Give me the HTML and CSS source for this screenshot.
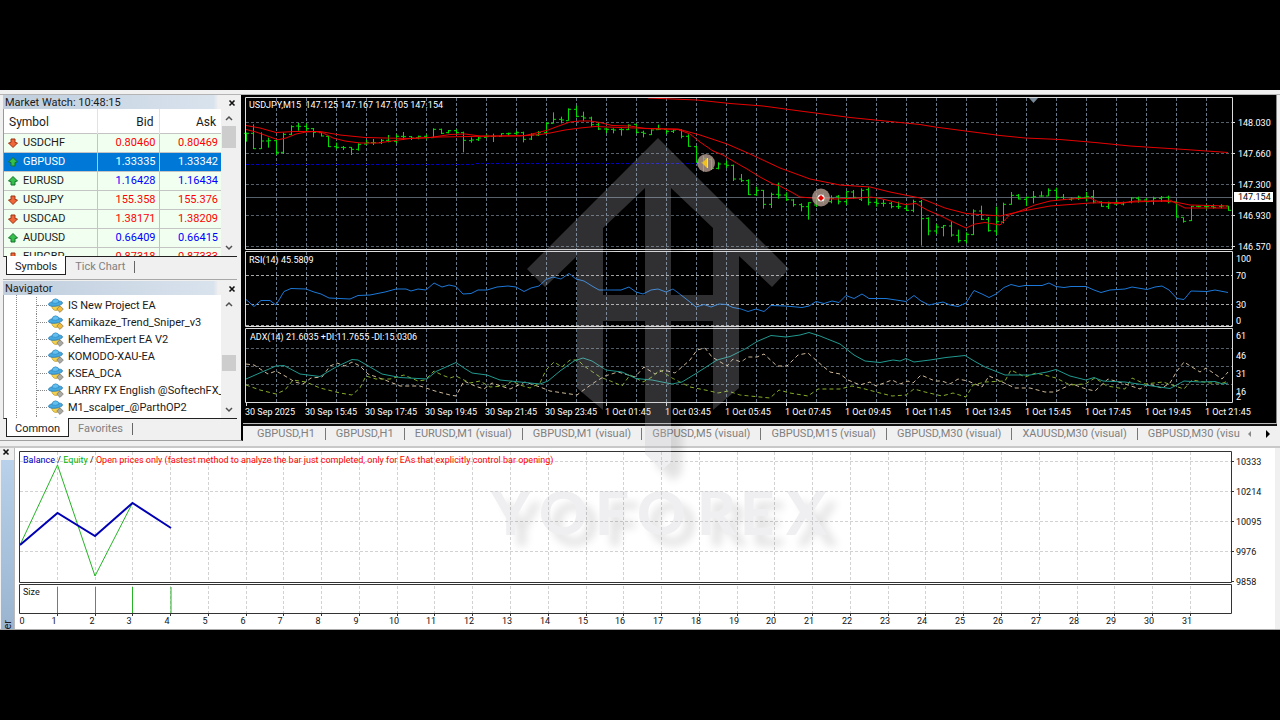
FILE: index.html
```html
<!DOCTYPE html>
<html lang="en">
<head>
    <meta charset="UTF-8">
    <meta name="viewport" content="width=device-width, initial-scale=1.0">
    <title>Strategy Tester - USDJPY,M15</title>
    <link rel="stylesheet" href="styles.css">
</head>
<body>

<svg class="symbols" aria-hidden="true">
    <symbol id="up" viewBox="0 0 10 10"><path d="M5 .5 9.5 5 7 5.500V9H3V5.500L.5 5Z" fill="#35c04c" stroke="#14702a"/></symbol>
    <symbol id="down" viewBox="0 0 10 10"><path d="M5 9.500 9.500 5 7 4.500V1H3V4.500L.5 5Z" fill="#f0673a" stroke="#9c3212"/></symbol>
    <symbol id="expert" viewBox="0 0 16 15">
        <path d="M3.500 7Q4 12.500 8.500 12.500 11 12 12 8Z" fill="#f5d24c" stroke="#b98f1c" stroke-width=".7"/>
        <ellipse cx="7.500" cy="5.600" rx="7.100" ry="2.600" transform="rotate(-7 7.500 5.600)" fill="#45a9e0" stroke="#2273a8" stroke-width=".7"/>
        <path d="M4 4.800Q4 1 7.500 .8 11 1 11 4.300 7.500 6.200 4 4.800Z" fill="#62bff0" stroke="#2a82b8" stroke-width=".6"/>
        <path d="M12 7.800 15.300 11.100 12 14.400 8.700 11.100Z" fill="currentColor" stroke="#77736a" stroke-width=".7"/>
    </symbol>
    <symbol id="cross" viewBox="0 0 8 8"><path d="M1.500 1.500 6.500 6.500M6.500 1.500 1.500 6.500" stroke="#111" stroke-width="1.600"/></symbol>
    <symbol id="chev-up" viewBox="0 0 8 6"><path d="M1 5 4 2 7 5" fill="none" stroke="#505050" stroke-width="1.500"/></symbol>
    <symbol id="chev-down" viewBox="0 0 8 6"><path d="M1 1 4 4 7 1" fill="none" stroke="#505050" stroke-width="1.500"/></symbol>
</svg>

<main class="terminal">
    <div class="toolbar-edge"></div>

    <div class="workspace">
        <aside class="sidebar">
            <section class="panel market">
                <header class="panel-title">
                    <span>Market Watch: 10:48:15</span>
                    <button type="button" aria-label="Close"><svg><use href="#cross"/></svg></button>
                </header>
                <div class="panel-body">
                    <div class="panel-view">
                        <table>
                            <thead><tr><th>Symbol</th><th>Bid</th><th>Ask</th></tr></thead>
                            <tbody>
                                <tr class="fall"><td><svg><use href="#down"/></svg>USDCHF</td><td>0.80460</td><td>0.80469</td></tr>
                                <tr class="selected"><td><svg><use href="#up"/></svg>GBPUSD</td><td>1.33335</td><td>1.33342</td></tr>
                                <tr class="rise"><td><svg><use href="#up"/></svg>EURUSD</td><td>1.16428</td><td>1.16434</td></tr>
                                <tr class="fall"><td><svg><use href="#down"/></svg>USDJPY</td><td>155.358</td><td>155.376</td></tr>
                                <tr class="fall"><td><svg><use href="#down"/></svg>USDCAD</td><td>1.38171</td><td>1.38209</td></tr>
                                <tr class="rise"><td><svg><use href="#up"/></svg>AUDUSD</td><td>0.66409</td><td>0.66415</td></tr>
                                <tr class="fall"><td><svg><use href="#down"/></svg>EURGBP</td><td>0.87318</td><td>0.87333</td></tr>
                            </tbody>
                        </table>
                    </div>
                    <div class="scroll"><svg><use href="#chev-up"/></svg><i class="thumb"></i><svg><use href="#chev-down"/></svg></div>
                </div>
                <nav class="panel-tabs">
                    <button type="button" class="active">Symbols</button>
                    <button type="button">Tick Chart</button>
                </nav>
            </section>

            <section class="panel navigator">
                <header class="panel-title">
                    <span>Navigator</span>
                    <button type="button" aria-label="Close"><svg><use href="#cross"/></svg></button>
                </header>
                <div class="panel-body">
                    <ul class="tree">
                        <li class="licensed"><svg><use href="#expert"/></svg>IS New Project EA</li>
                        <li class="licensed"><svg><use href="#expert"/></svg>Kamikaze_Trend_Sniper_v3</li>
                        <li><svg><use href="#expert"/></svg>KelhemExpert EA V2</li>
                        <li><svg><use href="#expert"/></svg>KOMODO-XAU-EA</li>
                        <li><svg><use href="#expert"/></svg>KSEA_DCA</li>
                        <li><svg><use href="#expert"/></svg>LARRY FX English @SoftechFX_</li>
                        <li><svg><use href="#expert"/></svg>M1_scalper_@ParthOP2</li>
                        <li><svg><use href="#expert"/></svg></li>
                    </ul>
                    <div class="scroll"><svg><use href="#chev-up"/></svg><i class="thumb low"></i><svg><use href="#chev-down"/></svg></div>
                </div>
                <nav class="panel-tabs">
                    <button type="button" class="active">Common</button>
                    <button type="button">Favorites</button>
                </nav>
            </section>
        </aside>

        <section class="charts">
            <div class="chart-window">
                <svg id="priceChart" viewBox="243 95 1033 328"></svg>
            </div>
            <nav class="chart-tabs">
                <button type="button">GBPUSD,H1</button>
                <button type="button">GBPUSD,H1</button>
                <button type="button">EURUSD,M1 (visual)</button>
                <button type="button">GBPUSD,M1 (visual)</button>
                <button type="button">GBPUSD,M5 (visual)</button>
                <button type="button">GBPUSD,M15 (visual)</button>
                <button type="button">GBPUSD,M30 (visual)</button>
                <button type="button">XAUUSD,M30 (visual)</button>
                <button type="button" class="cut">GBPUSD,M30 (visu</button>
                <span class="tab-arrows">
                    <svg viewBox="0 0 24 8"><path d="M4 1V7L1 4Z" fill="#888"/><path d="M19 0V8L23 4Z" fill="#000"/></svg>
                </span>
            </nav>
        </section>
    </div>

    <section class="tester">
        <div class="tester-handle">
            <button type="button" aria-label="Close"><svg><use href="#cross"/></svg></button>
            <span>Tester</span>
        </div>
        <div class="tester-graph">
            <svg id="testerChart" viewBox="15 448 1260 181"></svg>
        </div>
    </section>

    <svg class="watermark" viewBox="0 0 1280 540">
        <path d="M658 48 789 179 772 197 739 166V298L713 320V231H671V372L662 380 645 364V231H603V320L577 298V166L545 197 527 179ZM645 98 603 138V205H645ZM671 98V205H713V138Z" fill-rule="evenodd"/>
        <text y="445" x="491 539 595 637 697 740 786">YOFOREX</text>
    </svg>
</main>

<script src="charts.js"></script>
</body>
</html>
```
FILE: styles.css
```css
* {
    box-sizing: border-box;
}

body {
    margin: 0;
    min-height: 100vh;
    display: flex;
    flex-direction: column;
    justify-content: center;
    background-color: #000;
    font-family: Roboto, "Noto Sans", sans-serif;
    font-size: 11px;
    color: #1a1a1a;
}

button {
    border: none;
    padding: 0;
    background: none;
    font: inherit;
    color: inherit;
}

.symbols {
    position: absolute;
    width: 0;
    height: 0;
}

.terminal {
    position: relative;
    overflow: hidden;
    background-color: #f0f0f0;
}

.toolbar-edge {
    height: 5px;
    border-bottom: 1px solid #b4b4b4;
}

.workspace {
    display: flex;
    padding-bottom: 5px;
}

/* left panels */
.sidebar {
    flex: none;
    width: 243px;
    padding: 0 4px 0 3px;
    border-right: 2px solid #000;
    border-bottom: 1px solid #a0a0a0;
}

.panel {
    height: 184px;
    display: flex;
    flex-direction: column;
    padding-bottom: 4px;
}

.navigator {
    height: 161px;
    border-top: 1px solid #a8a8a8;
    padding: 1px 0 3px;
}

.panel-title {
    flex: none;
    height: 14px;
    display: flex;
    align-items: center;
    justify-content: space-between;
    padding: 1px 1px 0 2px;
    background: linear-gradient(90deg, #bfcddc, #d9e3ee 90%, #f0f0f0 92%);
}

.panel-title button {
    display: flex;
}

.panel-title svg,
.tester-handle svg {
    width: 8px;
    height: 8px;
}

.panel-body {
    flex: 1;
    min-height: 0;
    display: flex;
    background-color: #fff;
    border-left: 1px solid #999;
    border-bottom: 1px solid #222;
    overflow: hidden;
}

.panel-view {
    flex: 1;
}

table {
    width: 100%;
    table-layout: fixed;
    border-collapse: collapse;
}

th {
    height: 24px;
    padding: 2px 5px 0;
    font-size: 12px;
    font-weight: normal;
    text-align: right;
    border-right: 1px solid #e2e2e2;
}

th:first-child,
td:first-child {
    width: 93px;
    text-align: left;
}

td {
    height: 19px;
    padding: 0 3px;
    line-height: 16px;
    text-align: right;
    background-color: #f0fff0;
    border: 1px solid #c4c4c4;
    border-left: none;
}

th:last-child,
td:last-child {
    border-right: none;
}

td svg {
    width: 10px;
    height: 10px;
    margin: 0 5px 0 1px;
    vertical-align: -2px;
}

.fall td + td {
    color: #f00;
}

.rise td + td {
    color: #00f;
}

.selected td {
    background-color: #0078d7;
    color: #fff;
}

.scroll {
    flex: none;
    width: 16px;
    display: flex;
    flex-direction: column;
    align-items: center;
    padding: 6px 0 5px;
    background-color: #f0f0f0;
}

.scroll svg {
    width: 8px;
    height: 6px;
}

.thumb {
    width: 14px;
    height: 22px;
    margin: 5px 0 auto;
    background-color: #cdcdcd;
}

.thumb.low {
    height: 16px;
    margin-top: 48px;
}

.panel-tabs {
    flex: none;
    height: 18px;
    display: flex;
    padding-left: 3px;
    color: #808080;
}

.panel-tabs button {
    padding: 0 9px;
}

.panel-tabs button:last-child {
    height: 12px;
    margin-top: 4px;
    line-height: 12px;
    border-right: 1px solid #666;
}

.panel-tabs .active {
    margin-top: -1px;
    padding: 2px 8px 0;
    background-color: #fff;
    color: #1a1a1a;
    border: 1px solid #222;
    border-top: none;
}

.tree {
    flex: 1;
    margin: 0 0 0 12px;
    padding: 2px 0 0;
    list-style: none;
    overflow: hidden;
    white-space: nowrap;
    border-left: 1px dotted #888;
}

.tree li {
    display: flex;
    align-items: center;
    height: 17px;
    margin-left: 19px;
    border-left: 1px dotted #888;
}

.tree li::before {
    content: "";
    flex: none;
    width: 10px;
    border-top: 1px dotted #888;
}

.tree svg {
    flex: none;
    width: 16px;
    height: 15px;
    margin: 0 4px 0 1px;
    color: #a9a9a4;
}

.tree .licensed svg {
    color: #f3bb35;
}

/* chart window */
.charts {
    flex: 1;
    min-width: 0;
    display: flex;
    flex-direction: column;
}

.chart-window {
    background-color: #000;
    border-right: 1px solid #888;
    margin-right: 3px;
    border-bottom: 1px solid #bbb;
}

.chart-window svg,
.tester-graph svg {
    display: block;
    width: 100%;
    height: auto;
}

.chart-tabs {
    flex: 1;
    display: flex;
    align-items: center;
    margin: 0 3px 0 0;
    padding-left: 4px;
    border-top: 2px solid #111;
    color: #808080;
    white-space: nowrap;
}

.chart-tabs button {
    flex: none;
    height: 12px;
    line-height: 12px;
    padding: 0 10px;
    border-right: 1px solid #777;
}

.chart-tabs .cut {
    flex: 1;
    min-width: 0;
    overflow: hidden;
    border-right: none;
    padding-right: 0;
    text-align: left;
}

.tab-arrows {
    flex: none;
    width: 36px;
    padding: 0 6px;
}

.tab-arrows svg {
    display: block;
    width: 24px;
    height: 8px;
}

/* strategy tester */
.tester {
    display: flex;
    border-top: 2px solid #c8c8c8;
    border-bottom: 1px solid #aaa;
}

.tester-handle {
    flex: none;
    width: 15px;
    display: flex;
    flex-direction: column;
    border-right: 1px solid #bbb;
}

.tester-handle button {
    height: 12px;
    padding: 0 2px;
    display: flex;
}

.tester-handle span {
    flex: 1;
    width: 13px;
    margin-left: 1px;
    background: linear-gradient(#b9d1ea, #9ab4d0);
    writing-mode: sideways-lr;
    line-height: 13px;
    text-indent: -22px;
    overflow: hidden;
}

.tester-graph {
    flex: 1;
    min-width: 0;
    background-color: #fff;
    border-right: 5px solid #f0f0f0;
}

/* drawing styles */
svg text {
    font-family: Roboto, "Noto Sans", sans-serif;
    font-size: 9px;
}

#priceChart text {
    fill: #fff;
}

#testerChart text {
    fill: #111;
}

#priceChart path,
#testerChart path {
    fill: none;
}

.grid {
    stroke: #667788;
    stroke-dasharray: 3 2;
}

.grid-h {
    stroke: #55606b;
    stroke-dasharray: 3 2;
}

.level {
    stroke: #a8a8a8;
    stroke-dasharray: 3 2;
}

.frame {
    stroke: #dcdcdc;
}

.bars {
    stroke: #00e000;
}

.ma {
    stroke: #e80000;
}

.rsi {
    stroke: #1c78d8;
}

.adx {
    stroke: #209a90;
}

.plus-di {
    stroke: #86ac28;
    stroke-dasharray: 4 3;
}

.minus-di {
    stroke: #cdb99a;
    stroke-dasharray: 4 3;
}

.bid {
    stroke: #56616c;
}

.order {
    stroke: #0000c8;
    stroke-dasharray: 3 2;
}

#priceChart .tag {
    fill: #fff;
}

#priceChart .tag-text {
    fill: #000;
}

.light-grid {
    stroke: #d2d2d2;
    stroke-dasharray: 3 2;
}

.dark-frame {
    stroke: #333;
}

.balance {
    stroke: #0000b4;
    stroke-width: 2;
}

.equity {
    stroke: #24b424;
}

#testerChart .t-blue {
    fill: #0000c0;
}

#testerChart .t-green {
    fill: #00b400;
}

#testerChart .t-red {
    fill: #f00;
}

.mid {
    text-anchor: middle;
}

/* logo over the whole terminal */
.watermark {
    position: absolute;
    left: 0;
    top: 0;
    width: 100%;
    pointer-events: none;
    fill: #c0c0c8;
    opacity: 0.25;
    filter: drop-shadow(11px 11px 4px rgba(0, 0, 0, 0.45));
}

.watermark text {
    font-family: Lato, sans-serif;
    font-size: 60px;
    font-weight: 900;
}
```
FILE: charts.js
```js
// high, low, open, close of each bar, in thirds of a pixel from the chart top
const bars = [
    [128,155,130,130],[103,177,130,176],[127,177,176,153],[143,173,153,152],[150,195,152,187],[128,192,187,133],
    [106,135,133,110],[99,122,108,109],[100,125,109,116],[114,142,116,127],[127,139,128,138],[138,171,139,170],
    [158,177,170,172],[168,180,172,173],[171,195,172,178],[160,182,178,163],[150,165,162,158],[147,165,158,158],
    [147,162,158,151],[135,157,151,154],[133,160,154,139],[126,150,139,140],[138,150,140,144],[137,148,143,139],
    [134,148,139,143],[115,143,143,118],[116,132,118,130],[120,130,128,122],[118,130,122,128],[125,187,128,151],
    [142,158,152,150],[140,153,149,144],[133,143,142,139],[131,156,139,139],[130,140,139,131],[128,137,131,130],
    [123,138,130,128],[125,157,128,148],[130,150,147,135],[123,138,135,128],[97,132,128,100],[67,100,100,88],
    [80,100,88,90],[55,92,92,58],[47,82,58,79],[65,93,79,84],[80,110,84,104],[96,120,104,117],
    [113,129,117,118],[115,130,118,120],[115,137,118,119],[103,120,119,106],[103,130,103,127],[122,142,127,130],
    [118,135,134,120],[104,120,119,118],[114,132,118,124],[117,129,124,120],[118,145,120,139],[133,170,139,169],
    [168,218,170,217],[197,245,217,205],[205,240,208,235],[217,238,235,222],[212,234,222,226],[224,273,226,267],
    [252,276,267,272],[268,315,272,314],[290,318,314,301],[300,356,301,343],[308,354,343,313],[278,326,313,315],
    [307,333,315,329],[327,350,330,344],[340,364,344,350],[337,389,350,338],[321,351,345,325],[310,340,325,330],
    [316,340,335,325],[315,343,319,335],[304,345,335,305],[300,326,306,322],[295,333,328,301],[292,346,299,337],
    [323,350,337,340],[329,350,340,340],[336,355,340,350],[335,357,350,350],[345,363,355,361],[329,367,361,335],
    [330,467,335,386],[382,436,385,423],[402,432,423,411],[405,439,412,407],[394,440,408,435],[419,458,436,452],
    [427,460,452,433],[358,435,434,363],[347,390,363,388],[381,425,388,422],[350,435,423,395],[338,400,396,343],
    [306,344,343,316],[312,328,316,327],[320,348,328,322],[303,340,322,320],[304,320,318,318],[295,318,318,301],
    [293,330,301,322],[312,330,322,328],[322,332,328,326],[317,330,325,322],[306,334,322,320],[300,340,320,336],
    [334,350,336,349],[335,357,350,340],[332,345,342,340],[335,346,342,338],[321,340,335,324],[320,338,325,330],
    [324,338,330,335],[320,344,333,325],[318,336,325,322],[317,340,322,335],[333,383,336,381],[382,398,382,394],
    [348,393,392,349],[347,352,349,350],[344,358,350,350],[343,356,350,352],[343,355,350,348],[348,362,348,361]
];

const maFast = "246,129.5 256,132 266,135.5 278,139.8 286,138 296,134 306,132 315,131.5 323,133 333,138 345,141 360,143 378,143 395,140.5 410,138.5 440,137 470,136.5 500,136 525,135.5 536,133 548,130 560,125.5 570,122 580,121 590,121 600,122.5 612,125.5 630,126 645,128.5 678,129.5 690,134 700,142 713,151 723,155 733,161 747,169 760,177 773,184 780,186 793,193 800,197 812,198 835,199 860,198 870,197 880,198.5 895,202 905,204.5 916,203.5 927,210 940,215.5 953,222 966,228 975,224 985,222.5 1000,225 1010,214.5 1020,211 1035,205 1050,201 1070,199 1090,198 1100,202.5 1120,203.5 1135,201 1160,201 1170,200 1177,204 1185,208 1228,208";
const maSlow = "246,125.5 260,128 276,132.5 295,131.5 320,131.5 340,135 365,137.5 385,138 410,138.5 430,137.5 450,134.5 465,134 480,136 520,136 540,134.5 550,133 565,130 580,128 595,126.5 620,127.5 650,128.5 678,129 700,135 727,144 750,154 780,168 810,179 840,185 870,187 890,192 920,198 945,208 966,213.5 1000,216 1020,211.5 1050,206 1090,203 1120,202.5 1160,201 1175,202 1190,205 1228,206";
const maLong = "648,98 697,100 730,103.5 763,106 800,111 850,117.5 880,120.5 920,124.5 935,127 1000,135.5 1025,138 1060,139.5 1095,142.5 1130,146 1185,149.5 1228,152.5";
const rsi = "246,299.5 254,306.5 261,300.5 270,300.5 276,305 284,291.5 291,288.5 306,289 314,292 321,294 329,298 350,299 358,295.5 370,295 385,292 396,289 406,289 411,291 418,289 426,290 434,283 442,287 449,285 456,286.5 463,294 471,293.5 478,290 487,290 497,287 508,286 516,287 524,291.5 531,288 539,286 546,279.5 553,277 561,279 569,273.5 576,279 584,281 592,286 599,290 621,290 629,287 636,292 643,294 651,290 658,289 666,292 673,289 681,295 690,302 696,307 704,304.5 711,307 719,304 726,304.5 733,307.5 741,309 748,311.5 756,309 764,311.5 771,305.5 785,306 802,307.5 809,306 816,301.5 824,303.5 832,301 839,302.5 846,295.5 854,298.5 862,294 869,298.5 886,298.5 906,301.5 914,295.5 921,301 929,305 943,302 950,305 958,306.5 966,303 974,290.5 982,294 989,297.5 996,294 1004,287.5 1011,284.5 1019,286.5 1025,285.5 1042,285.5 1049,283 1056,286.5 1064,287.5 1071,286.5 1086,286.5 1094,290 1101,292.5 1110,290 1125,289 1132,287 1147,289.5 1155,287 1162,286 1169,290 1177,298.5 1184,299.5 1191,291 1207,291.5 1215,290 1228,292.5";
const adx = "246,379 262,372 276,366 284,365.5 300,374 320,376.5 336,367 352,359.5 358,360 370,367 382,374 400,377.5 427,379 436,371.5 456,362.5 464,368 472,373 487,375 500,380 520,382 540,384 548,381 560,371 574,361 583,358 592,361 606,370 622,372 636,378.5 652,380 672,384 682,382 696,373.5 717,360 730,356.5 745,349 757,341.5 771,335.5 786,337 800,335 809,332.5 820,336 840,344 854,355 865,361 880,362.5 893,360 900,361 906,358.5 914,362 930,360 946,357.5 965,355.5 975,361.5 985,367 1005,375 1030,375 1047,372 1056,369.5 1070,376 1086,380 1094,377.5 1103,381 1125,382 1145,385 1170,388.5 1184,381 1200,382 1215,381.5 1223,384 1228,383";
const plusDi = "246,385 260,390 276,394 285,390 293,380 306,382 320,388 340,393 352,395 360,388 366,376 376,379 390,379 404,375 418,381 425,380 434,371 442,375 450,378 456,376 470,383 480,381 490,387 505,386 512,381 520,385 530,388 540,383 546,370 554,362 562,367 570,360 578,360 584,366 600,377 613,382 622,386 630,375 643,382 652,377 660,370 672,378 690,387 710,391 718,393 728,391 740,395 770,398 779,390 790,393 808,396 818,389 840,389 852,386 865,389 880,393 892,396 906,395 914,389 925,392 942,396 953,393 966,397 973,385 985,382 1005,381 1011,370 1025,377 1036,373 1056,378 1070,385 1085,384 1095,378 1107,386 1125,389 1132,378 1145,384 1163,382 1175,386 1184,389 1192,380 1210,383 1223,383 1228,381";
const minusDi = "246,364 254,365 268,374 276,371 285,376 295,382 303,384 311,378 322,377 330,366 337,363 345,366 352,362 360,366 368,374 385,380 400,386 420,386 435,391 450,395 456,396 464,381 475,386 484,389 492,383 510,389 525,382 540,387 550,391 577,395 585,389 595,382 605,376 618,372 635,377 644,367 655,374 664,370 675,373 690,360 697,350 705,348 712,357 727,366 733,359 741,362 748,357 757,357 764,354 777,366 787,366 798,355 808,353 818,362 830,372 840,374 848,380 860,385 870,382 876,386 892,380 900,384 908,381 913,383 921,375 935,381 942,381 950,384 958,379 968,381 982,387 989,376 1000,381 1015,388 1030,388 1045,392 1055,392 1072,384 1086,389 1095,391 1108,379 1122,383 1140,389 1148,384 1162,388 1170,383 1177,371 1184,362 1200,372 1206,368 1222,379 1228,372";

function path(cls, d) {
    return `<path class="${cls}" d="${d}"/>`;
}

function text(x, y, str, cls = "") {
    return `<text x="${x}" y="${y}" class="${cls}">${str}</text>`;
}

function line(cls, points) {
    return path(cls, "M" + points.replaceAll(" ", "L"));
}

function drawPriceChart() {
    let out = "";

    let v = "";
    for (let i = 0; i < 32; i++) {
        const x = 276.5 + 30 * i;
        v += `M${x} 98V250M${x} 252V326M${x} 329V402`;
    }
    out += path("grid", v);
    out += path("grid-h", [122.5, 153.5, 184.5, 215.5, 246.5].map(y => `M246 ${y}H1232`).join(""));
    out += path("grid-h", [348.5, 366.5, 384.5].map(y => `M246 ${y}H1232`).join(""));
    out += path("level", "M246 275.5H1232M246 304.5H1232M246 325.5H1232");
    out += path("bid", "M246 197.5H1232");
    out += path("order", "M246 164.5H474M476 163.5H706");

    let b = "";
    bars.forEach(([h, l, o, c], i) => {
        const x = Math.floor(246 + 7.5 * i) + 0.5;
        const y = n => 90 + n / 3;
        b += `M${x} ${y(h)}V${y(l)}M${x - 2.5} ${y(o)}H${x}M${x} ${y(c)}H${x + 2.5}`;
    });
    out += path("bars", b);

    out += line("ma", maFast) + line("ma", maSlow) + line("ma", maLong);
    out += line("rsi", rsi);
    out += line("minus-di", minusDi) + line("plus-di", plusDi) + line("adx", adx);

    out += path("frame", "M245.5 97.5H1232.5V249.5H245.5ZM245.5 251.5H1232.5V326.5H245.5ZM245.5 328.5H1232.5V402.5H245.5Z");

    // trade markers
    out += `<circle cx="706" cy="163" r="9" fill="#b49c90" opacity=".8"/><polygon points="702,163 707,158 707,168" fill="#f0c020"/><path class="frame" d="M707.500 158V168"/>`;
    out += `<circle cx="821" cy="197.500" r="9" fill="#b49c90" opacity=".8"/><circle cx="821" cy="198" r="3.500" fill="#fff"/><polygon points="821,195 824,198 821,201 818,198" fill="#e00000"/>`;
    out += `<polygon points="1029,98 1038,98 1033.500,103" fill="#778899"/>`;

    out += text(249, 108, "USDJPY,M15&#160; 147.125 147.167 147.105 147.154");
    out += text(249, 263, "RSI(14) 45.5809");
    out += text(250, 340, "ADX(14) 21.6035 +DI:11.7655 -DI:15.0306");

    [["148.030", 126], ["147.660", 157], ["147.300", 188], ["146.930", 219], ["146.570", 250]].forEach(([s, y]) => {
        out += path("frame", `M1233 ${y - 3.5}H1235`) + text(1238, y, s);
    });
    out += `<rect class="tag" x="1234" y="192" width="39" height="10"/>` + text(1238, 200, "147.154", "tag-text");
    [["100", 262], ["70", 279], ["30", 308], ["0", 324], ["61", 339], ["46", 359], ["31", 377], ["16", 395], ["2", 400]].forEach(([s, y]) => {
        out += text(1236, y, s);
    });

    const times = ["30 Sep 2025", "30 Sep 15:45", "30 Sep 17:45", "30 Sep 19:45", "30 Sep 21:45", "30 Sep 23:45",
        "1 Oct 01:45", "1 Oct 03:45", "1 Oct 05:45", "1 Oct 07:45", "1 Oct 09:45", "1 Oct 11:45",
        "1 Oct 13:45", "1 Oct 15:45", "1 Oct 17:45", "1 Oct 19:45", "1 Oct 21:45"];
    times.forEach((t, i) => {
        out += path("frame", `M${246.5 + 60 * i} 403V406`) + text(245 + 60 * i, 415, t);
    });

    document.getElementById("priceChart").innerHTML = out;
}

function drawTester() {
    const step = 37.77;
    let out = "";
    let v = "";
    let ticks = "";
    for (let i = 1; i < 32; i++) {
        const x = Math.floor(19.5 + step * i) + 0.5;
        v += `M${x} 452V582M${x} 586V614`;
        ticks += `M${x} 614V616`;
    }
    out += path("light-grid", v + "M20 461.5H1232M20 491.5H1232M20 521.5H1232M20 551.5H1232");
    out += path("dark-frame", "M19.5 451.5H1231.5V582.5H19.5ZM19.5 584.5H1231.5V613.5H19.5Z" + ticks);

    out += path("equity", "M20 545L57.5 465 95 576 132.5 503M57.5 587V613M95.5 587V613M132.5 587V613M171 587V613");
    out += path("balance", "M20 545L57.5 513 95 536 132.5 503 171 528");

    out += `<text x="23" y="463"><tspan class="t-blue">Balance</tspan> / <tspan class="t-green">Equity</tspan> / <tspan class="t-red">Open prices only (fastest method to analyze the bar just completed, only for EAs that explicitly control bar opening)</tspan></text>`;
    out += text(23, 595, "Size");

    [["10333", 465], ["10214", 495], ["10095", 525], ["9976", 555], ["9858", 585]].forEach(([s, y]) => {
        out += path("dark-frame", `M1232 ${y - 3.5}H1234`) + text(1236, y, s);
    });
    out += text(22, 624, "0", "mid");
    for (let i = 1; i < 32; i++) {
        out += text(Math.round(16 + step * i), 624, i, "mid");
    }
    document.getElementById("testerChart").innerHTML = out;
}

drawPriceChart();
drawTester();
```
